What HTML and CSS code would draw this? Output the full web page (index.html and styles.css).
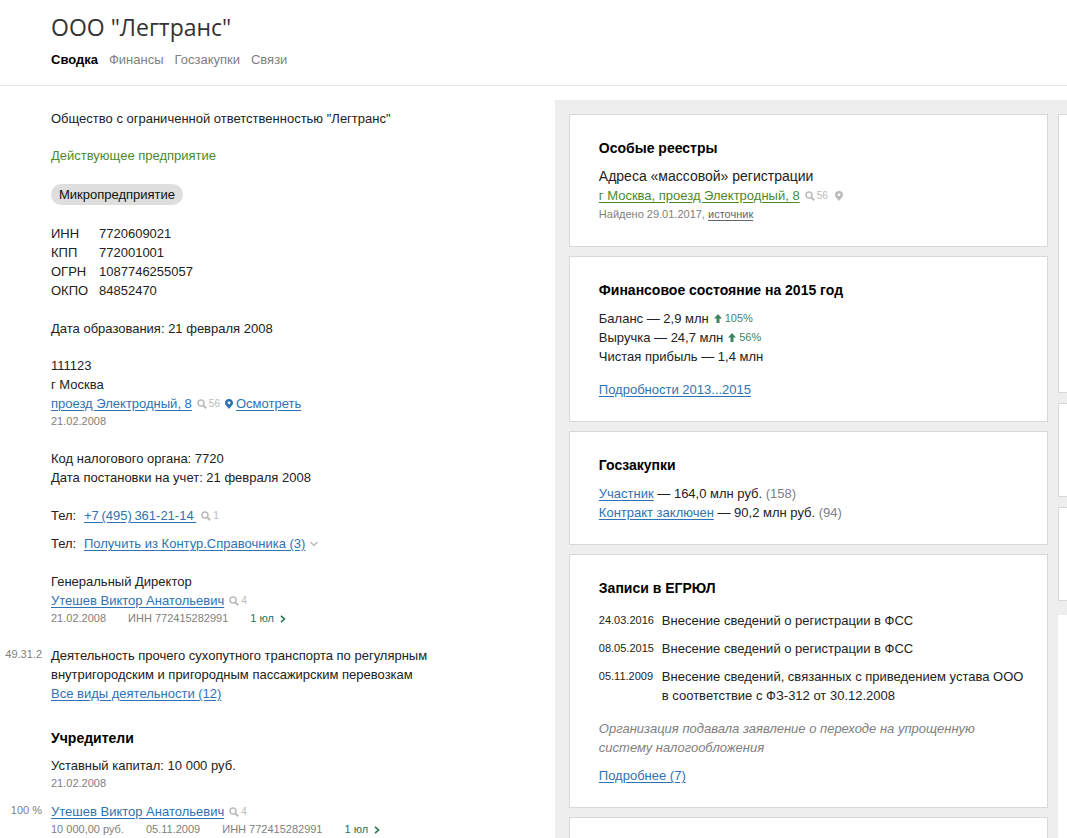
FILE: index.html
```html
<!DOCTYPE html>
<html lang="ru">
<head>
    <meta charset="UTF-8">
    <meta name="viewport" content="width=device-width, initial-scale=1.0">
    <title>ООО "Легтранс"</title>
    <link rel="stylesheet" href="styles.css">
</head>
<body>
    <svg class="sprite" aria-hidden="true">
        <symbol id="search" viewBox="0 0 10 10">
            <circle cx="4" cy="4" r="3" fill="none" stroke="currentColor" stroke-width="1.5"/>
            <path d="M6.2 6.2 L9.2 9.2" stroke="currentColor" stroke-width="2"/>
        </symbol>
        <symbol id="pin" viewBox="0 0 8 10">
            <path fill="currentColor" fill-rule="evenodd" d="M4 0a4 4 0 0 0-4 3.9C0 5.4 1 6.3 2 7.500L4 10l2-2.500C7 6.300 8 5.400 8 3.900A4 4 0 0 0 4 0zM4 2.400a1.400 1.400 0 1 1 0 2.800a1.400 1.400 0 0 1 0-2.800z"/>
        </symbol>
        <symbol id="up" viewBox="0 0 8 9">
            <path fill="currentColor" d="M4 0l4 4.500H5.500V9h-3V4.500H0z"/>
        </symbol>
        <symbol id="next" viewBox="0 0 6 8">
            <path fill="none" stroke="currentColor" stroke-width="1.6" d="M1 .8L4.500 4L1 7.200"/>
        </symbol>
        <symbol id="down" viewBox="0 0 8 6">
            <path fill="none" stroke="currentColor" stroke-width="1.500" d="M.5 1L4 4.500L7.500 1"/>
        </symbol>
    </svg>

    <header>
        <h1>ООО "Легтранс"</h1>
        <nav>
            <a href="#" class="active">Сводка</a>
            <a href="#">Финансы</a>
            <a href="#">Госзакупки</a>
            <a href="#">Связи</a>
        </nav>
    </header>

    <main>
        <section class="summary">
            <p>Общество с ограниченной ответственностью "Легтранс"</p>
            <p class="status">Действующее предприятие</p>
            <p class="badge">Микропредприятие</p>

            <table class="codes">
                <tr><th scope="row">ИНН</th><td>7720609021</td></tr>
                <tr><th scope="row">КПП</th><td>772001001</td></tr>
                <tr><th scope="row">ОГРН</th><td>1087746255057</td></tr>
                <tr><th scope="row">ОКПО</th><td>84852470</td></tr>
            </table>

            <p>Дата образования: 21 февраля 2008</p>

            <div class="block">
                <div>111123</div>
                <div>г Москва</div>
                <div class="line">
                    <a href="#">проезд Электродный, 8</a>
                    <span class="count"><svg class="icon-search"><use href="#search"/></svg>56</span>
                    <span class="look"><svg class="icon-pin"><use href="#pin"/></svg><a href="#">Осмотреть</a></span>
                </div>
                <div class="small">21.02.2008</div>
            </div>

            <div class="block">
                <div>Код налогового органа: 7720</div>
                <div>Дата постановки на учет: 21 февраля 2008</div>
            </div>

            <div class="block phones">
                <div class="line"><span class="label">Тел:</span><a href="#">+7&thinsp;(495)&thinsp;361-21-14&thinsp;</a><span class="count"><svg class="icon-search"><use href="#search"/></svg>1</span></div>
                <div class="line"><span class="label">Тел:</span><a href="#">Получить из Контур.Справочника (3)</a><svg class="icon-down"><use href="#down"/></svg></div>
            </div>

            <div class="block">
                <div>Генеральный Директор</div>
                <div class="line">
                    <a href="#">Утешев Виктор Анатольевич</a>
                    <span class="count"><svg class="icon-search"><use href="#search"/></svg>4</span>
                </div>
                <div class="small meta">
                    <span>21.02.2008</span>
                    <span>ИНН 772415282991</span>
                    <span class="date">1 юл <svg class="icon-next"><use href="#next"/></svg></span>
                </div>
            </div>

            <div class="row activity">
                <div class="small side">49.31.2</div>
                <div>
                    <div class="activity-name">Деятельность прочего сухопутного транспорта по регулярным внутригородским и пригородным пассажирским перевозкам</div>
                    <a href="#">Все виды деятельности (12)</a>
                </div>
            </div>

            <h2>Учредители</h2>
            <div>Уставный капитал: 10 000 руб.</div>
            <div class="small">21.02.2008</div>

            <div class="row founder">
                <div class="small side">100 %</div>
                <div>
                    <div class="line">
                        <a href="#">Утешев Виктор Анатольевич</a>
                        <span class="count"><svg class="icon-search"><use href="#search"/></svg>4</span>
                    </div>
                    <div class="small meta">
                        <span>10 000,00 руб.</span>
                        <span>05.11.2009</span>
                        <span>ИНН 772415282991</span>
                        <span class="date">1 юл <svg class="icon-next"><use href="#next"/></svg></span>
                    </div>
                </div>
            </div>
        </section>

        <div class="column">
            <section class="card">
                <h2>Особые реестры</h2>
                <div class="lead">Адреса «массовой» регистрации</div>
                <div class="line">
                    <a href="#" class="green">г Москва, проезд Электродный, 8</a>
                    <span class="count"><svg class="icon-search"><use href="#search"/></svg>56 <svg class="icon-pin"><use href="#pin"/></svg></span>
                </div>
                <div class="small found">Найдено 29.01.2017, <a href="#">источник</a></div>
            </section>

            <section class="card">
                <h2>Финансовое состояние на 2015 год</h2>
                <div class="line">Баланс — 2,9 млн <span class="growth"><svg class="icon-up"><use href="#up"/></svg>105%</span></div>
                <div class="line">Выручка — 24,7 млн <span class="growth"><svg class="icon-up"><use href="#up"/></svg>56%</span></div>
                <div>Чистая прибыль — 1,4 млн</div>
                <div class="details"><a href="#">Подробности 2013...2015</a></div>
            </section>

            <section class="card">
                <h2>Госзакупки</h2>
                <div><a href="#">Участник</a> — 164,0 млн руб. <span class="gray">(158)</span></div>
                <div><a href="#">Контракт заключен</a> — 90,2 млн руб. <span class="gray">(94)</span></div>
            </section>

            <section class="card">
                <h2>Записи в ЕГРЮЛ</h2>
                <div class="records">
                    <time>24.03.2016</time>
                    <div>Внесение сведений о регистрации в ФСС</div>
                    <time>08.05.2015</time>
                    <div>Внесение сведений о регистрации в ФСС</div>
                    <time>05.11.2009</time>
                    <div>Внесение сведений, связанных с приведением устава ООО в соответствие с ФЗ-312 от 30.12.2008</div>
                </div>
                <p class="note">Организация подавала заявление о переходе на упрощенную систему налогообложения</p>
                <a href="#">Подробнее (7)</a>
            </section>

            <section class="card"></section>
        </div>

        <div class="column next">
            <section class="card tall"></section>
            <section class="card"></section>
            <section class="card"></section>
        </div>
    </main>
</body>
</html>
```
FILE: styles.css
```css
body {
    margin: 0;
    height: 100vh;
    display: flex;
    flex-direction: column;
    overflow: hidden;
    font-family: "Liberation Sans", Arial, sans-serif;
    font-size: 13px;
    line-height: 19px;
    color: #222;
    background: #fff;
}

.sprite {
    display: none;
}

header {
    padding: 11px 51px 16px;
    border-bottom: 1px solid #e4e4e4;
}

h1 {
    margin: 0 0 7px;
    font-family: "Open Sans", "Noto Sans", sans-serif;
    font-size: 23px;
    font-weight: 400;
    line-height: 32px;
    color: #333;
}

nav {
    display: flex;
    gap: 11px;
}

nav a {
    color: #808080;
    text-decoration: none;
}

nav .active {
    color: #000;
    font-weight: bold;
}

main {
    flex: 1;
    min-height: 0;
    display: grid;
    grid-template-columns: 52% minmax(0, 1fr) 9px;
    align-items: start;
    padding-top: 14px;
}

a {
    color: #3072b3;
    text-underline-offset: 2px;
}

h2 {
    margin: 0 0 9px;
    font-size: 14px;
    line-height: 19px;
    color: #000;
}

.summary {
    padding: 9px 51px 0;
}

.summary p {
    margin: 0 0 18px;
}

.summary h2 {
    margin-bottom: 8px;
}

.block,
.codes,
.summary .status,
.summary .badge {
    margin: 0 0 19px;
}

.summary .status {
    color: #4c8a2c;
}

.summary .badge {
    width: fit-content;
    padding: 0 8px;
    line-height: 21px;
    border-radius: 11px;
    background: #dedede;
    color: #111;
}

.codes {
    border-collapse: collapse;
}

.codes th,
.codes td {
    padding: 0;
    font-weight: normal;
    text-align: left;
}

.codes th {
    width: 48px;
}

.line {
    display: flex;
    align-items: center;
    gap: 5px;
    white-space: nowrap;
}

.small {
    font-size: 11px;
    line-height: 17px;
    color: #808080;
}

.count {
    display: flex;
    align-items: center;
    gap: 2px;
    font-size: 10px;
    color: #bbb;
}

.count .icon-pin {
    margin-left: 5px;
}

.look {
    display: flex;
    align-items: center;
    gap: 3px;
    color: #3072b3;
}

.icon-search {
    width: 10px;
    height: 10px;
}

.icon-pin {
    width: 8px;
    height: 10px;
}

.icon-up {
    width: 8px;
    height: 9px;
}

.icon-next {
    width: 6px;
    height: 8px;
}

.icon-down {
    width: 8px;
    height: 6px;
    color: #bbb;
}

.phones {
    display: grid;
    gap: 9px;
}

.label {
    width: 28px;
}

.meta {
    display: flex;
    gap: 22px;
}

.meta .date {
    display: flex;
    align-items: center;
    gap: 6px;
    color: #2b7550;
}

/* the gutter on the left holds codes and shares */
.row {
    display: grid;
    grid-template-columns: 42px 1fr;
    column-gap: 9px;
    margin-left: -51px;
}

.side {
    text-align: right;
}

.activity {
    margin-bottom: 26px;
}

.activity-name {
    max-width: 400px;
}

.founder {
    margin-top: 10px;
}

.column {
    display: flex;
    flex-direction: column;
    gap: 9px;
    padding: 14px 10px 14px 14px;
    background: #eee;
}

.card {
    min-height: 46px;
    padding: 24px 20px 22px 29px;
    border: 1px solid #d8d8d8;
    background: #fff;
}

.card .lead {
    font-size: 14px;
}

.card .green {
    color: #4c8a2c;
}

.found a {
    color: #666;
}

.card .found {
    line-height: 19px;
}

.growth {
    display: flex;
    align-items: center;
    gap: 3px;
    font-size: 11px;
    color: #3f8560;
}

.details {
    margin-top: 14px;
}

.gray {
    color: #808080;
}

.records {
    display: grid;
    grid-template-columns: 55px 1fr;
    gap: 9px 8px;
    margin-top: 13px;
}

.records time {
    font-size: 11px;
}

.note {
    margin: 14px 0 9px;
    font-style: italic;
    color: #808080;
}

/* second column goes past the right edge of the window */
.next {
    gap: 10px;
    padding-left: 0;
    padding-right: 0;
}

.next .card {
    padding-left: 0;
    padding-right: 0;
    border-right: 0;
}

.next .tall {
    min-height: 231px;
}
```
